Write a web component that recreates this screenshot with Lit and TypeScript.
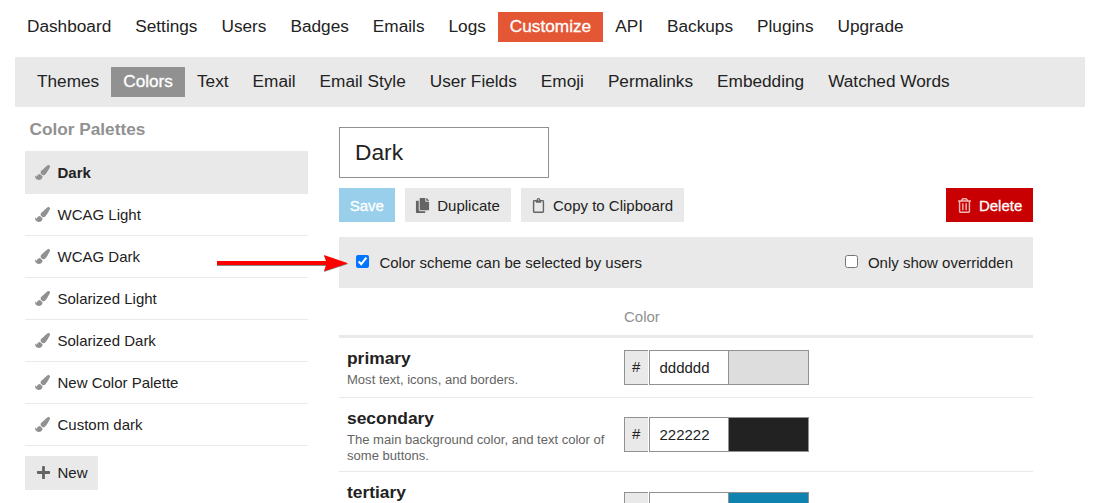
import { LitElement, html, css, svg } from "lit";
import { customElement, property } from "lit/decorators.js";
import { classMap } from "lit/directives/class-map.js";

const ICONS: Record<string, { width: number; d: string }> = {
  brush: {
    width: 512,
    d: "M167.02 309.34c-40.12 2.58-76.53 17.86-97.19 72.3-2.35 6.21-8 9.98-14.59 9.98-11.11 0-45.46-27.67-55.25-34.35C0 439.62 37.93 512 128 512c75.86 0 128-43.77 128-120.19 0-3.11-.65-6.08-.97-9.13l-88.01-73.34zM457.89 0c-15.16 0-29.37 6.71-40.21 16.45C213.27 199.05 192 203.34 192 257.09c0 13.7 3.25 26.76 8.73 38.7l63.82 53.18c7.21 1.8 14.64 3.03 22.39 3.03 62.11 0 98.11-45.47 211.16-256.46 7.38-14.35 13.9-29.85 13.9-45.99C512 20.64 486 0 457.89 0z",
  },
  plus: {
    width: 448,
    d: "M416 208H272V64c0-17.67-14.33-32-32-32h-32c-17.67 0-32 14.33-32 32v144H32c-17.67 0-32 14.33-32 32v32c0 17.67 14.33 32 32 32h144v144c0 17.67 14.33 32 32 32h32c17.67 0 32-14.33 32-32V304h144c17.67 0 32-14.33 32-32v-32c0-17.67-14.33-32-32-32z",
  },
  copy: {
    width: 448,
    d: "M320 448v40c0 13.255-10.745 24-24 24H24c-13.255 0-24-10.745-24-24V120c0-13.255 10.745-24 24-24h72v296c0 30.879 25.121 56 56 56h168zm0-344V0H152c-13.255 0-24 10.745-24 24v368c0 13.255 10.745 24 24 24h272c13.255 0 24-10.745 24-24V128H344c-13.2 0-24-10.8-24-24zm120.971-31.029L375.029 7.029A24 24 0 0 0 358.059 0H352v96h96v-6.059a24 24 0 0 0-7.029-16.97z",
  },
  clipboard: {
    width: 384,
    d: "M336 64h-80c0-35.3-28.7-64-64-64s-64 28.7-64 64H48C21.5 64 0 85.5 0 112v352c0 26.5 21.5 48 48 48h288c26.5 0 48-21.5 48-48V112c0-26.5-21.5-48-48-48zM192 40c13.3 0 24 10.7 24 24s-10.7 24-24 24-24-10.7-24-24 10.7-24 24-24zm144 418c0 3.3-2.7 6-6 6H54c-3.3 0-6-2.7-6-6V118c0-3.3 2.7-6 6-6h42v36c0 6.6 5.4 12 12 12h168c6.6 0 12-5.4 12-12v-36h42c3.3 0 6 2.7 6 6z",
  },
  trash: {
    width: 448,
    d: "M268 416h24a12 12 0 0 0 12-12V188a12 12 0 0 0-12-12h-24a12 12 0 0 0-12 12v216a12 12 0 0 0 12 12zM432 80h-82.41l-34-56.7A48 48 0 0 0 274.41 0H173.59a48 48 0 0 0-41.16 23.3L98.41 80H16A16 16 0 0 0 0 96v16a16 16 0 0 0 16 16h16v336a48 48 0 0 0 48 48h288a48 48 0 0 0 48-48V128h16a16 16 0 0 0 16-16V96a16 16 0 0 0-16-16zM171.84 50.91A6 6 0 0 1 177 48h94a6 6 0 0 1 5.15 2.91L293.61 80H154.39zM368 464H80V128h288zm-212-48h24a12 12 0 0 0 12-12V188a12 12 0 0 0-12-12h-24a12 12 0 0 0-12 12v216a12 12 0 0 0 12 12z",
  },
};

@customElement("d-icon")
class DIcon extends LitElement {
  @property() name = "plus";

  static styles = css`
    :host {
      display: block;
      width: 15px;
      height: 15px;
      flex: none;
    }
    .glyph {
      display: block;
      width: 15px;
      height: 15px;
      fill: currentColor;
    }
  `;

  render() {
    const icon = ICONS[this.name];
    return html`<svg class="glyph" viewBox="0 0 ${icon.width} 512">${svg`<path d=${icon.d}></path>`}</svg>`;
  }
}

@customElement("nav-pills")
class NavPills extends LitElement {
  @property({ attribute: false }) items: string[] = [];
  @property() active = "";
  @property() tone = "primary";

  static styles = css`
    :host {
      display: block;
    }
    .list {
      display: flex;
      margin: 0;
      padding: 0;
      list-style: none;
    }
    .item {
      height: 30px;
      padding: 0 12px;
      font-size: 17.235px;
      line-height: 29px;
      white-space: nowrap;
      color: #222;
    }
    .active {
      color: #fff;
      -webkit-text-stroke: 0.3px #fff;
    }
    .primary {
      background: #e45735;
    }
    .secondary {
      background: #919191;
    }
  `;

  render() {
    return html`<ul class="list">
      ${this.items.map((item) => {
        const on = item === this.active;
        return html`<li
          class=${classMap({ item: true, active: on, [this.tone]: on })}
        >${item}</li>`;
      })}
    </ul>`;
  }
}

@customElement("color-input")
class ColorInput extends LitElement {
  @property() hex = "";

  static styles = css`
    :host {
      display: flex;
      width: 185px;
      height: 35px;
      box-sizing: border-box;
      font-size: 15px;
      color: #222;
    }
    .hash,
    .value,
    .swatch {
      box-sizing: border-box;
      height: 35px;
      border: 1px solid #919191;
    }
    .hash {
      width: 24px;
      margin-right: 1px;
      padding-left: 7px;
      border-right: 0;
      background: #e9e9e9;
      line-height: 32px;
    }
    .value {
      width: 80px;
      padding-left: 9.5px;
      background: #fff;
      line-height: 33px;
    }
    .swatch {
      width: 80px;
      border-left: 0;
    }
  `;

  render() {
    return html`
      <span class="hash">#</span>
      <span class="value">${this.hex}</span>
      <span class="swatch" style="background:#${this.hex}"></span>
    `;
  }
}

@customElement("app-root")
class AppRoot extends LitElement {
  static styles = css`
    :host {
      display: block;
      position: relative;
      height: 503px;
      overflow: hidden;
      background: #fff;
      color: #222;
      font-family: "Liberation Sans", Arial, sans-serif;
      font-size: 15px;
    }
    .main-nav {
      padding: 12px 15px 15px;
    }
    .sub-nav {
      margin: 0 12px 0 15px;
      padding: 10px;
      background: #e9e9e9;
    }
    .content {
      display: grid;
      grid-template-columns: 283px 694px;
      column-gap: 31px;
      padding-left: 25px;
    }
    .heading {
      height: 44px;
      margin: 0;
      padding-left: 4.5px;
      box-sizing: border-box;
      font-size: 17.235px;
      line-height: 44px;
      color: #919191;
    }
    .palettes {
      margin: 0 0 10px;
      padding: 0;
      list-style: none;
    }
    .palette {
      display: flex;
      align-items: center;
      height: 42px;
      box-sizing: border-box;
      padding: 0 10px;
      gap: 7.5px;
      line-height: 17px;
      border-bottom: 1px solid #e9e9e9;
    }
    .palette:first-child {
      height: 43px;
      padding-top: 1px;
    }
    .palette-icon {
      color: #919191;
    }
    .selected {
      background: #e9e9e9;
      font-weight: bold;
    }
    .editor {
      padding-top: 20px;
    }
    .name {
      width: 210px;
      height: 51px;
      box-sizing: border-box;
      padding: 0 15px;
      border: 1px solid #919191;
      font-size: 22.74px;
      line-height: 48px;
    }
    .toolbar {
      display: flex;
      gap: 10px;
      margin: 10px 0 15px;
    }
    .button {
      display: inline-flex;
      align-items: center;
      gap: 6.75px;
      height: 34px;
      box-sizing: border-box;
      padding: 0 10.75px;
      background: #e9e9e9;
      white-space: nowrap;
    }
    .new {
      display: flex;
      width: 73px;
      padding-bottom: 1px;
    }
    .button-icon {
      color: #646464;
    }
    .save {
      background: #99cfeb;
      color: #fff;
      -webkit-text-stroke: 0.3px #fff;
    }
    .delete {
      margin-left: auto;
      background: #c80001;
      color: #fff;
      -webkit-text-stroke: 0.3px #fff;
    }
    .delete-icon {
      color: #f4b9b9;
    }
    .options {
      display: flex;
      justify-content: space-between;
      align-items: center;
      height: 51px;
      box-sizing: border-box;
      padding: 0 20px 0 17px;
      background: #e9e9e9;
    }
    .option {
      display: flex;
      align-items: center;
      gap: 10.4px;
    }
    .check {
      width: 13px;
      height: 13px;
      margin: 0 0 3px;
    }
    .table-head,
    .row {
      display: grid;
      grid-template-columns: 285px 1fr;
      box-sizing: border-box;
    }
    .table-head {
      height: 50px;
      border-bottom: 3px solid #e9e9e9;
      color: #919191;
    }
    .column {
      grid-column: 2;
      padding-top: 20px;
      line-height: 18px;
    }
    .row {
      align-items: center;
      height: 74px;
      border-bottom: 1px solid #e9e9e9;
    }
    .row:last-child {
      height: 76px;
    }
    .short {
      height: 60px;
    }
    .about {
      align-self: start;
      padding: 8px 8px 0;
    }
    .color-name {
      margin: 0;
      font-size: 17.4px;
      line-height: 24px;
    }
    .description {
      margin: 2px 0 0;
      font-size: 13.06px;
      line-height: 16px;
      color: #646464;
    }
    .arrow {
      position: absolute;
      left: 210px;
      top: 250px;
      width: 145px;
      height: 28px;
    }
  `;

  private sections = ["Dashboard", "Settings", "Users", "Badges", "Emails", "Logs", "Customize", "API", "Backups", "Plugins", "Upgrade"];
  private pages = ["Themes", "Colors", "Text", "Email", "Email Style", "User Fields", "Emoji", "Permalinks", "Embedding", "Watched Words"];
  private palettes = ["Dark", "WCAG Light", "WCAG Dark", "Solarized Light", "Solarized Dark", "New Color Palette", "Custom dark"];
  private colors = [
    { name: "primary", text: "Most text, icons, and borders.", hex: "dddddd", short: true },
    { name: "secondary", text: "The main background color, and text color of some buttons.", hex: "222222", short: false },
    { name: "tertiary", text: "", hex: "0f82af", short: false },
  ];

  render() {
    return html`
      <nav-pills class="main-nav" .items=${this.sections} active="Customize" tone="primary"></nav-pills>
      <nav-pills class="sub-nav" .items=${this.pages} active="Colors" tone="secondary"></nav-pills>
      <div class="content">
        <aside>
          <h3 class="heading">Color Palettes</h3>
          <ul class="palettes">
            ${this.palettes.map(
              (name, i) => html`<li class=${classMap({ palette: true, selected: i === 0 })}>
                <d-icon class="palette-icon" name="brush"></d-icon><span>${name}</span>
              </li>`
            )}
          </ul>
          <div class="button new"><d-icon class="button-icon" name="plus"></d-icon><span>New</span></div>
        </aside>
        <main class="editor">
          <div class="name">Dark</div>
          <div class="toolbar">
            <div class="button save">Save</div>
            <div class="button"><d-icon class="button-icon" name="copy"></d-icon><span>Duplicate</span></div>
            <div class="button"><d-icon class="button-icon" name="clipboard"></d-icon><span>Copy to Clipboard</span></div>
            <div class="button delete"><d-icon class="delete-icon" name="trash"></d-icon><span>Delete</span></div>
          </div>
          <div class="options">
            <label class="option"><input class="check" type="checkbox" checked /><span>Color scheme can be selected by users</span></label>
            <label class="option"><input class="check" type="checkbox" /><span>Only show overridden</span></label>
          </div>
          <div class="table-head"><span class="column">Color</span></div>
          ${this.colors.map(
            (c) => html`<div class=${classMap({ row: true, short: c.short })}>
              <div class="about">
                <h4 class="color-name">${c.name}</h4>
                <p class="description">${c.text}</p>
              </div>
              <color-input hex=${c.hex}></color-input>
            </div>`
          )}
        </main>
      </div>
      <svg class="arrow" viewBox="210 250 145 28">
        <path d="M217 262h110l-3-6 24 8-24 8 3-6H217z" fill="#555" opacity=".7"></path>
        <path d="M217 261h109l-2-6 24 8.300-24 8 2-6.300H217z" fill="#f00"></path>
      </svg>
    `;
  }
}
